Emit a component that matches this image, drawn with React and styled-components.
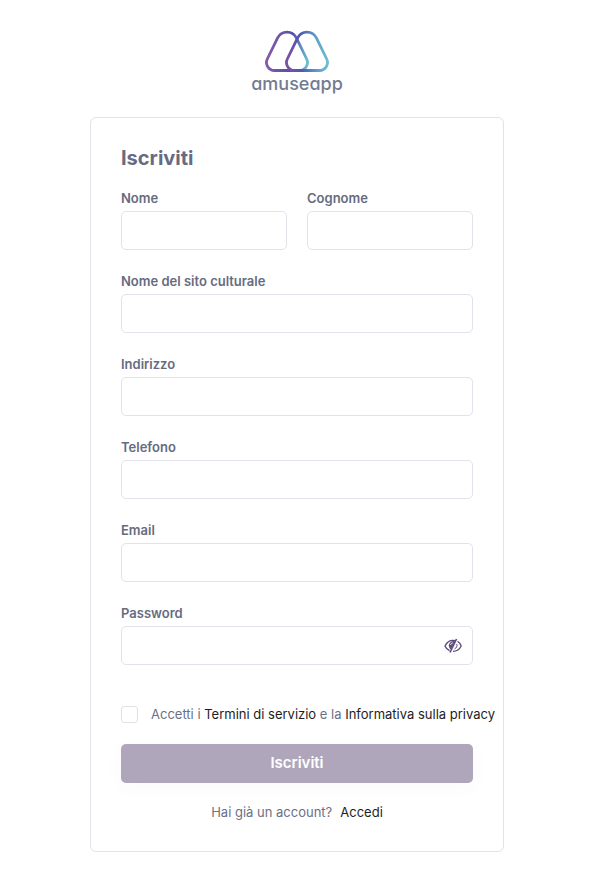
import { useState } from "react";
import styled, { createGlobalStyle } from "styled-components";

const GlobalStyle = createGlobalStyle`
  * {
    box-sizing: border-box;
  }
  body {
    margin: 0;
    background-color: #ffffff;
    color: #6b7085;
    font-family: "Inter", "Liberation Sans", sans-serif;
    font-size: 13px;
    line-height: 20px;
  }
`;

const Page = styled.main`
  display: flex;
  flex-direction: column;
  align-items: center;
  padding: 28px 1px 38px 0;
`;

const Logo = styled.div`
  display: flex;
  flex-direction: column;
  align-items: center;
  margin-bottom: 22px;
`;

const LogoName = styled.span`
  color: #727b91;
  font-size: 18px;
  font-weight: 500;
  line-height: 22px;
  font-feature-settings: "cv11";
`;

const Card = styled.form`
  display: flex;
  flex-direction: column;
  width: 100%;
  max-width: 414px;
  padding: 25px 30px 29px;
  border: 1px solid #e2e3ea;
  border-radius: 6px;
`;

const Title = styled.h1`
  margin: 0 0 15px;
  color: #666b82;
  font-size: 20px;
  font-weight: 700;
  line-height: 30px;
`;

const Fields = styled.div`
  display: grid;
  grid-template-columns: 1fr 1fr;
  gap: 21px 20px;
`;

const Field = styled.div`
  display: flex;
  flex-direction: column;
  gap: 3px;
  min-width: 0;
  grid-column: ${(props) => (props.$half ? "auto" : "1 / -1")};
`;

const Label = styled.label`
  color: #666b80;
  font-weight: 600;
`;

const InputBox = styled.div`
  display: flex;
  align-items: center;
  height: 39px;
  border: 1px solid #e2e3ea;
  border-radius: 5px;
  &:focus-within {
    border-color: #b0a6bc;
  }
`;

const Input = styled.input`
  flex: 1;
  min-width: 0;
  height: 100%;
  padding: 0 12px;
  border: none;
  outline: none;
  background: transparent;
  color: #3c4054;
  font: inherit;
`;

const EyeButton = styled.button`
  display: flex;
  padding: 0;
  margin-right: 10px;
  border: none;
  background: none;
  color: #5c4a7d;
  cursor: pointer;
`;

const Terms = styled.div`
  display: flex;
  align-items: center;
  gap: 13px;
  margin-top: 39px;
  white-space: nowrap;
`;

const Checkbox = styled.input`
  appearance: none;
  flex: none;
  width: 17px;
  height: 17px;
  margin: 0;
  border: 1px solid #dfe1e9;
  border-radius: 3px;
  &:checked {
    border-color: #5c4a7d;
    background-color: #5c4a7d;
  }
`;

const TextLink = styled.a`
  color: #1d1d25;
  text-decoration: none;
`;

const SubmitButton = styled.button`
  height: 39px;
  margin-top: 20px;
  padding: 0 16px 2px;
  border: none;
  border-radius: 5px;
  background-color: #b0a6bc;
  box-shadow: 0 4px 20px rgba(90, 80, 120, 0.03);
  color: #ffffff;
  font-family: inherit;
  font-size: 15px;
  font-weight: 600;
  cursor: pointer;
`;

const Login = styled.p`
  display: flex;
  justify-content: center;
  gap: 8px;
  margin: 19px 0 0;
`;

const fields = [
  { name: "nome", label: "Nome", type: "text", half: true },
  { name: "cognome", label: "Cognome", type: "text", half: true },
  { name: "sito", label: "Nome del sito culturale", type: "text" },
  { name: "indirizzo", label: "Indirizzo", type: "text" },
  { name: "telefono", label: "Telefono", type: "tel" },
  { name: "email", label: "Email", type: "email" },
  { name: "password", label: "Password", type: "password" },
];

function LogoMark() {
  return (
    <svg width="66" height="45" viewBox="0 0 66 45" fill="none" aria-hidden="true">
      <defs>
        <linearGradient id="left" x1="0" y1="30" x2="44" y2="34" gradientUnits="userSpaceOnUse">
          <stop offset="0" stopColor="#8a5cab" />
          <stop offset="0.6" stopColor="#5450a8" />
          <stop offset="1" stopColor="#6cc0cf" />
        </linearGradient>
        <linearGradient id="right" x1="22" y1="26" x2="65" y2="24" gradientUnits="userSpaceOnUse">
          <stop offset="0" stopColor="#7c51a6" />
          <stop offset="0.35" stopColor="#4f57ad" />
          <stop offset="0.7" stopColor="#5c9dcb" />
          <stop offset="1" stopColor="#72c2cf" />
        </linearGradient>
      </defs>
      <path
        d="M13.600 9.900A10.500 10.500 0 0 1 32.400 9.900L42.700 31A8 8 0 0 1 35.500 42.500H10.500A8 8 0 0 1 3.300 31Z"
        stroke="url(#left)"
        strokeWidth="2.800"
      />
      <path
        d="M33.600 9.900A10.500 10.500 0 0 1 52.400 9.900L62.700 31A8 8 0 0 1 55.500 42.500H30.500A8 8 0 0 1 23.300 31Z"
        stroke="url(#right)"
        strokeWidth="2.800"
      />
    </svg>
  );
}

function EyeIcon() {
  return (
    <svg width="18" height="16" viewBox="0 0 18 16" fill="none" aria-hidden="true">
      <path
        d="M11.500 2.700C7 1.700 3 4 1 8C2 10.200 3.600 11.800 5.500 12.700"
        stroke="currentColor"
        strokeWidth="1.400"
      />
      <path d="M11 3C7.500 2.500 5 4.500 4.800 7.300C4.800 9.300 5.600 10.500 6.800 11.500Z" fill="currentColor" />
      <path d="M6.500 7C6.800 5.700 7.600 5 8.800 4.900" stroke="#ffffff" strokeWidth="1" />
      <path d="M12.500 1L6 14.500" stroke="currentColor" strokeWidth="1.600" />
      <path
        d="M13.500 3.300C15.200 4.300 16.400 6 17.200 8C15.500 11.500 12.700 13.300 9 13.300"
        stroke="currentColor"
        strokeWidth="1.300"
      />
      <path d="M12.800 6C13.500 8 12.500 10 10.500 11" stroke="currentColor" strokeWidth="1" />
    </svg>
  );
}

function App() {
  const [showPassword, setShowPassword] = useState(false);

  const onSubmit = (e) => {
    e.preventDefault();
  };

  return (
    <>
      <GlobalStyle />
      <Page>
        <Logo>
          <LogoMark />
          <LogoName>amuseapp</LogoName>
        </Logo>
        <Card onSubmit={onSubmit}>
          <Title>Iscriviti</Title>
          <Fields>
            {fields.map(({ name, label, type, half }) => (
              <Field key={name} $half={half}>
                <Label htmlFor={name}>{label}</Label>
                <InputBox>
                  <Input
                    id={name}
                    name={name}
                    type={name === "password" && showPassword ? "text" : type}
                  />
                  {name === "password" && (
                    <EyeButton
                      type="button"
                      aria-label="Mostra password"
                      onClick={() => setShowPassword(!showPassword)}
                    >
                      <EyeIcon />
                    </EyeButton>
                  )}
                </InputBox>
              </Field>
            ))}
          </Fields>
          <Terms>
            <Checkbox id="terms" name="terms" type="checkbox" />
            <label htmlFor="terms">
              Accetti i <TextLink href="#termini">Termini di servizio</TextLink> e la{" "}
              <TextLink href="#privacy">Informativa sulla privacy</TextLink>
            </label>
          </Terms>
          <SubmitButton type="submit">Iscriviti</SubmitButton>
          <Login>
            <span>Hai già un account?</span>
            <TextLink href="#accedi">Accedi</TextLink>
          </Login>
        </Card>
      </Page>
    </>
  );
}

export default App;
